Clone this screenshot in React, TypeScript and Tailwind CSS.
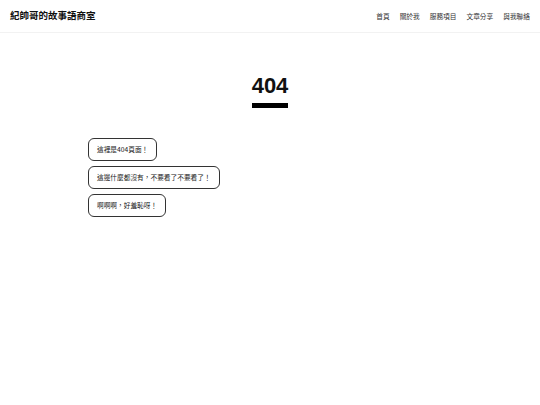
import React from "react";

export default function App() {
  const font = { fontFamily: '"Noto Sans CJK TC", "Noto Sans", sans-serif' };
  const nav = ["首頁", "關於我", "服務項目", "文章分享", "與我聯絡"];
  const bubbles = ["這裡是404頁面！", "這邊什麼都沒有，不要看了不要看了！", "啊啊啊，好羞恥呀！"];
  return (
    <div className="w-[540px] h-[405px] bg-white text-[#222]" style={font}>
      <header className="h-[33px] flex items-center justify-between px-[10px] border-b border-[#f2f2f2]">
        <div className="text-[9.5px] font-bold text-[#111] leading-none">紀帥哥的故事語商室</div>
        <nav className="flex gap-[10px] text-[6.7px] text-[#333] leading-none">
          {nav.map((n) => (
            <span key={n}>{n}</span>
          ))}
        </nav>
      </header>
      <div className="flex flex-col items-center pt-[42px]">
        <div className="flex flex-col items-stretch">
          <div
            className="text-[22px] font-bold leading-none text-[#111] whitespace-nowrap"
            style={{ fontFamily: '"Liberation Sans", "Noto Sans", sans-serif' }}
          >
            404
          </div>
          <div className="h-[5px] bg-black mt-[6px]"></div>
        </div>
      </div>
      <div className="flex flex-col items-start gap-[5px] pl-[88px] mt-[30px]">
        {bubbles.map((b) => (
          <div key={b} className="h-[23px] flex items-center px-[8px] border-[1.5px] border-[#333] rounded-[6px] text-[6.7px] text-[#222] leading-none">
            {b}
          </div>
        ))}
      </div>
    </div>
  );
}
